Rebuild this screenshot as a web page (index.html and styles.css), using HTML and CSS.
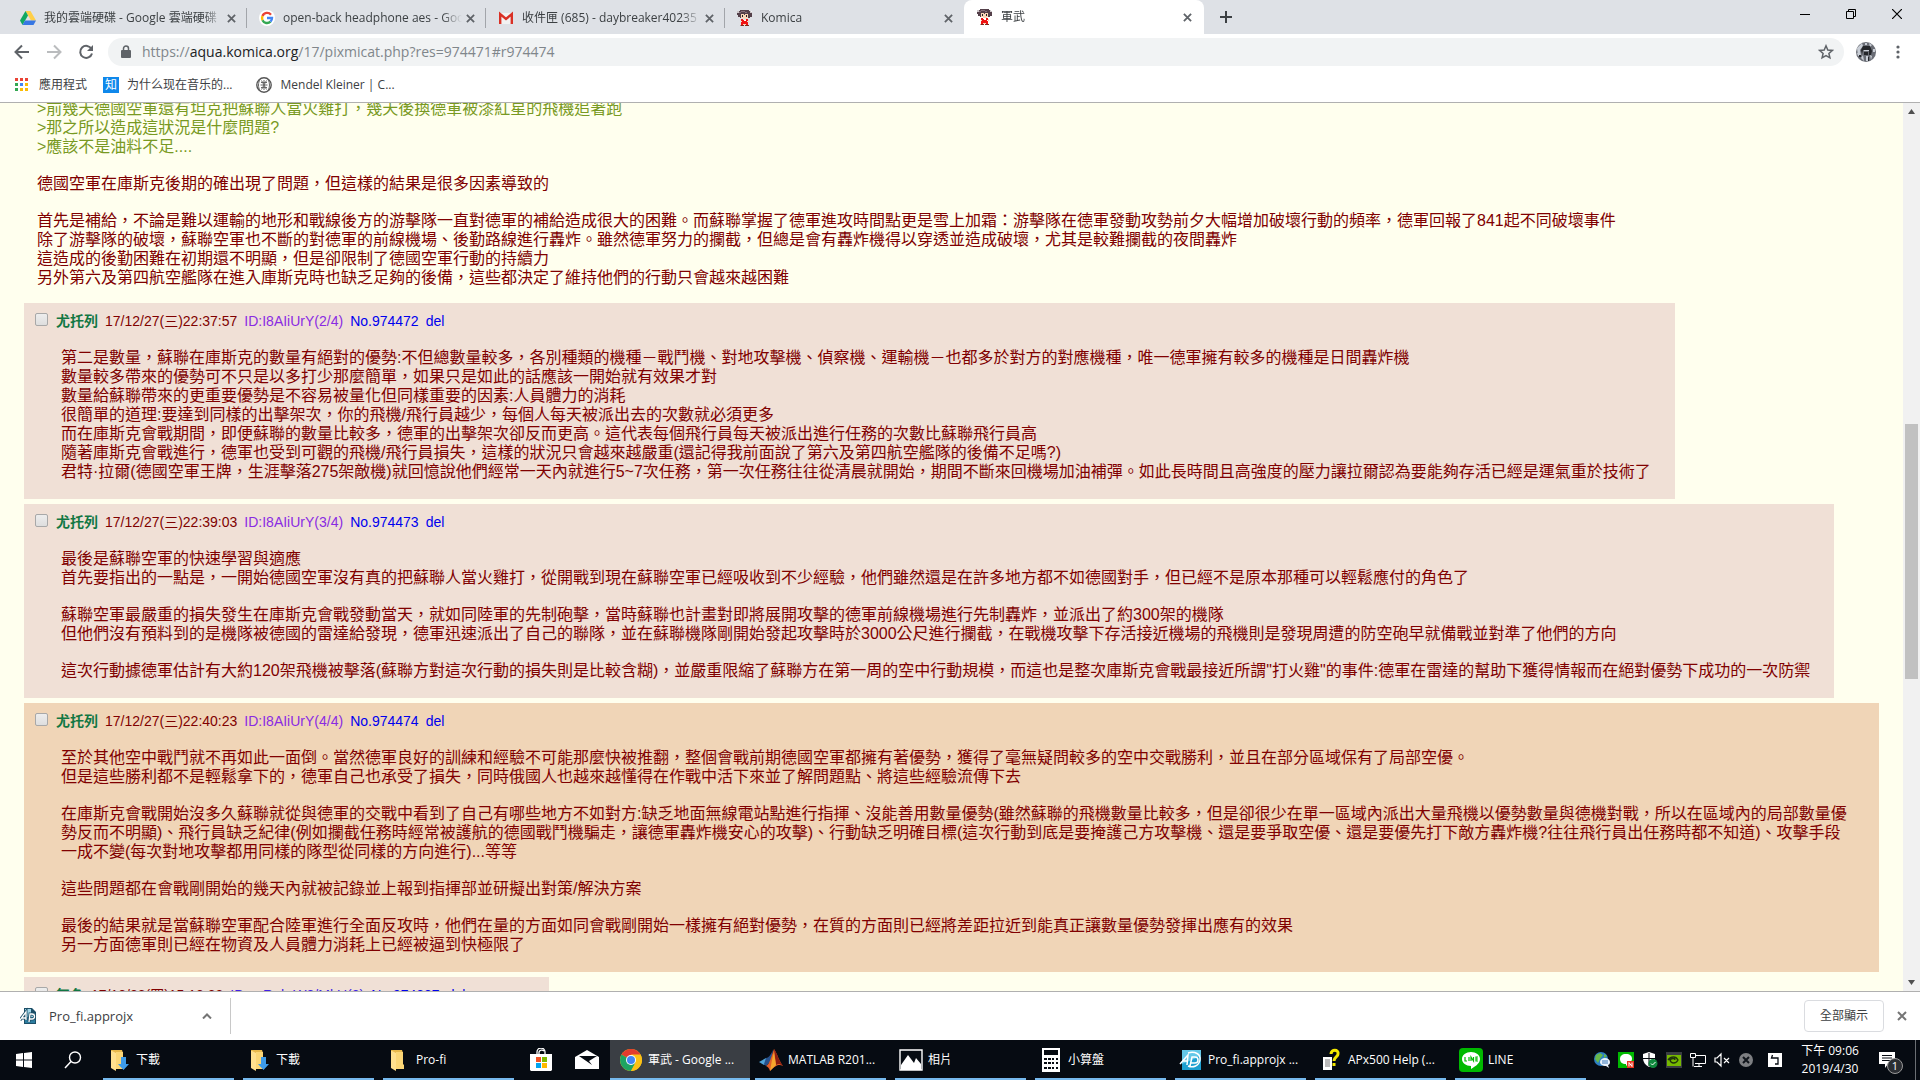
FILE: index.html
```html
<!DOCTYPE html>
<html lang="zh-Hant">
<head>
<meta charset="utf-8">
<title>軍武</title>
<link rel="stylesheet" href="styles.css">
</head>
<body>
<svg class="defs" aria-hidden="true">
  <symbol id="close" viewBox="0 0 10 10"><path d="M1 1l8 8M9 1L1 9" stroke="currentColor" stroke-width="2" fill="none"/></symbol>
  <symbol id="girl" viewBox="0 0 16 18">
    <path fill="#54404a" d="M3 1h9v1h2v1h1v5h-2v1H3V8H1V6H0V2h3z"/>
    <path fill="#86707a" d="M4 2h4v1H4zM2 3h2v1H2zM8 3h2v2H8z"/>
    <path fill="#fff" d="M0 2h2v2H0zM13 2h2v2h-2z" opacity=".7"/>
    <path fill="#f9d5b8" d="M4 5h7v4H4zM6 9h4v1H6zM4 12h1v2H4zM11 11h1v2h-1zM6 15h4v1H6z"/>
    <path fill="#222" d="M5 6h1v2H5zM9 6h1v2H9z"/>
    <path fill="#54404a" d="M4 4h8v1H4zM7 5h1v1H7z"/>
    <path fill="#f01212" d="M4 10h2v1h3v-1h2v2H4zM5 12h5v1H5zM4 13h7v3H9v-1H6v1H4z"/>
    <path fill="#fff" d="M7 11h2v1H7z"/>
    <path fill="#7c2a1c" d="M4 16h3v1H3zM8 16h4v1H8z"/>
  </symbol>
  <symbol id="folder" viewBox="0 0 24 24">
    <path fill="#e9b94c" d="M4 2h11l1 3v14H4z"/><path fill="#ffe08f" d="M5 3l4 2v18l-5-3V3z"/><path fill="#fbd676" d="M9 4h7v12l1 1v4H9z"/>
  </symbol>
  <symbol id="arrow-down" viewBox="0 0 24 24"><path fill="#3d9be9" d="M14 9h5v7h3l-5.500 6L11 16h3z"/></symbol>
</svg>

<header class="chrome">
  <div class="tabstrip">
    <div class="tab">
      <svg class="fav" viewBox="0 0 16 16"><path fill="#ffcf48" d="M5.500 1h5L16 10.500h-5z"/><path fill="#11a861" d="M5.500 1L8 5.500 2.500 15 0 10.500z"/><path fill="#3777e3" d="M5 10.500h11L13.500 15h-11z"/></svg>
      <span class="tab-title">我的雲端硬碟 - Google 雲端硬碟</span>
      <button class="tab-close" aria-label="關閉"><svg><use href="#close"/></svg></button>
    </div>
    <div class="tab">
      <svg class="fav" viewBox="0 0 16 16"><circle cx="8" cy="8" r="8" fill="#fff"/><g fill="none" stroke-width="2.400"><path stroke="#ea4335" d="M12 4.700A5 5 0 0 0 3.500 6"/><path stroke="#fbbc05" d="M3.500 6a5 5 0 0 0 0 4.200"/><path stroke="#34a853" d="M3.500 10.200A5 5 0 0 0 11.500 11.600"/><path stroke="#4285f4" d="M11.500 11.600A5 5 0 0 0 13 8H8"/></g></svg>
      <span class="tab-title">open-back headphone aes - Goo</span>
      <button class="tab-close" aria-label="關閉"><svg><use href="#close"/></svg></button>
    </div>
    <div class="tab">
      <svg class="fav" viewBox="0 0 16 16"><path fill="#f2f2f2" d="M1 3h14v11H1z"/><path fill="none" stroke="#d93025" stroke-width="2.400" d="M2.200 14V4L8 9l5.800-5v10"/></svg>
      <span class="tab-title">收件匣 (685) - daybreaker40235</span>
      <button class="tab-close" aria-label="關閉"><svg><use href="#close"/></svg></button>
    </div>
    <div class="tab tab-plain">
      <svg class="fav"><use href="#girl"/></svg>
      <span class="tab-title">Komica</span>
      <button class="tab-close" aria-label="關閉"><svg><use href="#close"/></svg></button>
    </div>
    <div class="tab tab-active">
      <svg class="fav"><use href="#girl"/></svg>
      <span class="tab-title">軍武</span>
      <button class="tab-close" aria-label="關閉"><svg><use href="#close"/></svg></button>
    </div>
    <button class="new-tab" aria-label="新分頁"><svg width="12" height="12" viewBox="0 0 12 12"><path d="M6 0v12M0 6h12" stroke="#3c4043" stroke-width="2"/></svg></button>
    <div class="window-buttons">
      <button aria-label="最小化"><svg width="10" height="10" viewBox="0 0 10 10"><path d="M0 5.500h10" stroke="#000"/></svg></button>
      <button aria-label="還原"><svg width="10" height="10" viewBox="0 0 10 10"><path d="M.5 2.500h7v7h-7zM2.500 2.500v-2h7v7h-2" stroke="#000" fill="none"/></svg></button>
      <button aria-label="關閉視窗"><svg width="10" height="10" viewBox="0 0 10 10"><path d="M0 0l10 10M10 0L0 10" stroke="#000" stroke-width="1.200"/></svg></button>
    </div>
  </div>

  <div class="toolbar">
    <button class="nav" aria-label="上一頁"><svg width="16" height="16" viewBox="0 0 16 16"><path d="M15 8H2M8 1.500L1.500 8 8 14.500" stroke="#5f6368" stroke-width="2" fill="none"/></svg></button>
    <button class="nav" aria-label="下一頁"><svg width="16" height="16" viewBox="0 0 16 16"><path d="M1 8h13M8 1.500L14.500 8 8 14.500" stroke="#babcbe" stroke-width="2" fill="none"/></svg></button>
    <button class="nav" aria-label="重新載入"><svg width="16" height="16" viewBox="0 0 16 16"><path d="M13.500 5A6 6 0 1 0 14 9.500" stroke="#5f6368" stroke-width="2" fill="none"/><path fill="#5f6368" d="M15 1v6H9z"/></svg></button>
    <div class="omnibox">
      <svg width="10" height="14" viewBox="0 0 10 14"><path fill="#5f6368" d="M1 5h8a1 1 0 0 1 1 1v6a1 1 0 0 1-1 1H1a1 1 0 0 1-1-1V6a1 1 0 0 1 1-1z"/><path d="M2.500 6V3.500a2.500 2.500 0 0 1 5 0V6" fill="none" stroke="#5f6368" stroke-width="1.500"/></svg>
      <span class="url">https://<b>aqua.komica.org</b>/17/pixmicat.php?res=974471#r974474</span>
      <button class="star" aria-label="加入書籤"><svg width="16" height="16" viewBox="0 0 16 16"><path d="M8 1.800l1.800 4.200 4.500.4-3.400 3 1 4.400L8 11.500l-3.900 2.300 1-4.400-3.400-3 4.500-.4z" fill="none" stroke="#5f6368" stroke-width="1.500"/></svg></button>
    </div>
    <button class="avatar" aria-label="個人資料"><svg width="20" height="20" viewBox="0 0 20 20"><circle cx="10" cy="10" r="10" fill="#6a6d75"/><path fill="#c9ced6" d="M1 6l5-5 1 3-3 4 1 5-3 1zM7 6h6v3H8zM13 1l3 2-2 2zM5 16l2-3 1 6zM10 14h2v5h-2zM14 13l2 1-1 4zM17 7h2v3h-2zM9 1h2v2H9zM1 11h2v3H2z"/><path fill="#24262a" d="M7 4h7l2 5-1 4h-2V8H7l-1 4-1-4zM8 10h4v3H8zM3 13h2v2H3zM12 15h1v4h-1z"/></svg></button>
    <button class="menu" aria-label="選單"><svg width="4" height="16" viewBox="0 0 4 16"><g fill="#5f6368"><circle cx="2" cy="3" r="1.600"/><circle cx="2" cy="8" r="1.600"/><circle cx="2" cy="13" r="1.600"/></g></svg></button>
  </div>

  <nav class="bookmarks">
    <a href="#apps" class="bm-apps"><svg width="14" height="14" viewBox="0 0 14 14"><path fill="#ea4335" d="M0 0h3v3H0zM5 0h3v3H5zM10 0h3v3h-3z"/><path fill="#34a853" d="M0 5h3v3H0zM0 10h3v3H0z"/><path fill="#4285f4" d="M5 5h3v3H5z"/><path fill="#fbbc05" d="M10 5h3v3h-3zM5 10h3v3H5zM10 10h3v3h-3z"/></svg><span>應用程式</span></a>
    <a href="#zhihu" class="bm-zhihu"><span class="zhi">知</span><span lang="zh-Hans">为什么现在音乐的...</span></a>
    <a href="#kleiner"><svg width="16" height="16" viewBox="0 0 16 16"><circle cx="8" cy="8" r="7.200" fill="none" stroke="#555" stroke-width="1.400"/><path d="M4 2.500c-2 3-2 8 0 11M12 2.500c2 3 2 8 0 11M5.500 3.500l5 9M10.500 3.500l-5 9M4.500 8h7M8 3v10M5 5.500h6M5 10.500h6" fill="none" stroke="#666"/></svg><span>Mendel Kleiner | C...</span></a>
  </nav>
</header>

<div class="viewport">
  <main class="thread">
    <article class="op">
      <p><span class="quote">&gt;前幾天德國空軍還有坦克把蘇聯人當火雞打，幾天後換德軍被漆紅星的飛機追著跑<br>&gt;那之所以造成這狀況是什麼問題?<br>&gt;應該不是油料不足....</span></p>
      <p>德國空軍在庫斯克後期的確出現了問題，但這樣的結果是很多因素導致的</p>
      <p>首先是補給，不論是難以運輸的地形和戰線後方的游擊隊一直對德軍的補給造成很大的困難。而蘇聯掌握了德軍進攻時間點更是雪上加霜：游擊隊在德軍發動攻勢前夕大幅增加破壞行動的頻率，德軍回報了841起不同破壞事件<br>除了游擊隊的破壞，蘇聯空軍也不斷的對德軍的前線機場、後勤路線進行轟炸。雖然德軍努力的攔截，但總是會有轟炸機得以穿透並造成破壞，尤其是較難攔截的夜間轟炸<br>這造成的後勤困難在初期還不明顯，但是卻限制了德國空軍行動的持續力<br>另外第六及第四航空艦隊在進入庫斯克時也缺乏足夠的後備，這些都決定了維持他們的行動只會越來越困難</p>
    </article>

    <article class="reply">
      <header class="meta"><input type="checkbox" aria-label="選取 974472"><b class="name">尤托列</b><span>17/12/27(三)22:37:57</span><span class="id">ID:I8AIiUrY(2/4)</span><a href="#r974472">No.974472</a><a href="#del">del</a></header>
      <div class="body">
        <p>第二是數量，蘇聯在庫斯克的數量有絕對的優勢:不但總數量較多，各別種類的機種－戰鬥機、對地攻擊機、偵察機、運輸機－也都多於對方的對應機種，唯一德軍擁有較多的機種是日間轟炸機<br>數量較多帶來的優勢可不只是以多打少那麼簡單，如果只是如此的話應該一開始就有效果才對<br>數量給蘇聯帶來的更重要優勢是不容易被量化但同樣重要的因素:人員體力的消耗<br>很簡單的道理:要達到同樣的出擊架次，你的飛機/飛行員越少，每個人每天被派出去的次數就必須更多<br>而在庫斯克會戰期間，即便蘇聯的數量比較多，德軍的出擊架次卻反而更高。這代表每個飛行員每天被派出進行任務的次數比蘇聯飛行員高<br>隨著庫斯克會戰進行，德軍也受到可觀的飛機/飛行員損失，這樣的狀況只會越來越嚴重(還記得我前面說了第六及第四航空艦隊的後備不足嗎?)<br>君特·拉爾(德國空軍王牌，生涯擊落275架敵機)就回憶說他們經常一天內就進行5~7次任務，第一次任務往往從清晨就開始，期間不斷來回機場加油補彈。如此長時間且高強度的壓力讓拉爾認為要能夠存活已經是運氣重於技術了</p>
      </div>
    </article>

    <article class="reply">
      <header class="meta"><input type="checkbox" aria-label="選取 974473"><b class="name">尤托列</b><span>17/12/27(三)22:39:03</span><span class="id">ID:I8AIiUrY(3/4)</span><a href="#r974473">No.974473</a><a href="#del">del</a></header>
      <div class="body">
        <p>最後是蘇聯空軍的快速學習與適應<br>首先要指出的一點是，一開始德國空軍沒有真的把蘇聯人當火雞打，從開戰到現在蘇聯空軍已經吸收到不少經驗，他們雖然還是在許多地方都不如德國對手，但已經不是原本那種可以輕鬆應付的角色了</p>
        <p>蘇聯空軍最嚴重的損失發生在庫斯克會戰發動當天，就如同陸軍的先制砲擊，當時蘇聯也計畫對即將展開攻擊的德軍前線機場進行先制轟炸，並派出了約300架的機隊<br>但他們沒有預料到的是機隊被德國的雷達給發現，德軍迅速派出了自己的聯隊，並在蘇聯機隊剛開始發起攻擊時於3000公尺進行攔截，在戰機攻擊下存活接近機場的飛機則是發現周遭的防空砲早就備戰並對準了他們的方向</p>
        <p>這次行動據德軍估計有大約120架飛機被擊落(蘇聯方對這次行動的損失則是比較含糊)，並嚴重限縮了蘇聯方在第一周的空中行動規模，而這也是整次庫斯克會戰最接近所謂"打火雞"的事件:德軍在雷達的幫助下獲得情報而在絕對優勢下成功的一次防禦</p>
      </div>
    </article>

    <article class="reply reply-target" id="r974474">
      <header class="meta"><input type="checkbox" aria-label="選取 974474"><b class="name">尤托列</b><span>17/12/27(三)22:40:23</span><span class="id">ID:I8AIiUrY(4/4)</span><a href="#r974474">No.974474</a><a href="#del">del</a></header>
      <div class="body">
        <p>至於其他空中戰鬥就不再如此一面倒。當然德軍良好的訓練和經驗不可能那麼快被推翻，整個會戰前期德國空軍都擁有著優勢，獲得了毫無疑問較多的空中交戰勝利，並且在部分區域保有了局部空優。<br>但是這些勝利都不是輕鬆拿下的，德軍自己也承受了損失，同時俄國人也越來越懂得在作戰中活下來並了解問題點、將這些經驗流傳下去</p>
        <p>在庫斯克會戰開始沒多久蘇聯就從與德軍的交戰中看到了自己有哪些地方不如對方:缺乏地面無線電站點進行指揮、沒能善用數量優勢(雖然蘇聯的飛機數量比較多，但是卻很少在單一區域內派出大量飛機以優勢數量與德機對戰，所以在區域內的局部數量優勢反而不明顯)、飛行員缺乏紀律(例如攔截任務時經常被護航的德國戰鬥機騙走，讓德軍轟炸機安心的攻擊)、行動缺乏明確目標(這次行動到底是要掩護己方攻擊機、還是要爭取空優、還是要優先打下敵方轟炸機?往往飛行員出任務時都不知道)、攻擊手段一成不變(每次對地攻擊都用同樣的隊型從同樣的方向進行)...等等</p>
        <p>這些問題都在會戰剛開始的幾天內就被記錄並上報到指揮部並研擬出對策/解決方案</p>
        <p>最後的結果就是當蘇聯空軍配合陸軍進行全面反攻時，他們在量的方面如同會戰剛開始一樣擁有絕對優勢，在質的方面則已經將差距拉近到能真正讓數量優勢發揮出應有的效果<br>另一方面德軍則已經在物資及人員體力消耗上已經被逼到快極限了</p>
      </div>
    </article>

    <article class="reply reply-short">
      <header class="meta"><input type="checkbox" aria-label="選取 974887"><b class="name">無名</b><span>17/12/28(四)15:18:38</span><span class="id id-alt">ID:snRahrW8/MkU(2)</span><a href="#r974887">No.974887</a><a href="#del">del</a></header>
    </article>
  </main>
  <div class="scrollbar">
    <svg class="sb-arrow" viewBox="0 0 17 17"><path fill="#505050" d="M5 11h7L8.500 6z"/></svg>
    <div class="sb-before"></div>
    <div class="sb-thumb"></div>
    <div class="sb-after"></div>
    <svg class="sb-arrow" viewBox="0 0 17 17"><path fill="#505050" d="M5 6h7l-3.500 5z"/></svg>
  </div>
</div>

<section class="shelf">
  <div class="download">
    <svg width="16" height="18" viewBox="0 0 16 18"><path fill="#1d4f68" d="M4 1h8l4 4v12H4z"/><path fill="#9fd6e8" d="M5 2h6v4h4v4H5z"/><path fill="#2d7da0" d="M5 10h10v6H5z"/><path d="M0 13l6-8v8M2 11h4M9 15l1-8h2a2.500 2.500 0 0 1 0 5H9" fill="none" stroke="#1d4f68" stroke-width="3"/><path d="M0 13l6-8v8M2 11h4M9 15l1-8h2a2.500 2.500 0 0 1 0 5H9" fill="none" stroke="#fff" stroke-width="1.300"/></svg>
    <span class="file">Pro_fi.approjx</span>
    <button class="caret" aria-label="更多"><svg width="10" height="6" viewBox="0 0 10 6"><path d="M1 5.500L5 1.500l4 4" fill="none" stroke="#757575" stroke-width="2"/></svg></button>
  </div>
  <button class="show-all">全部顯示</button>
  <button class="shelf-close" aria-label="關閉下載列"><svg width="10" height="10"><use href="#close"/></svg></button>
</section>

<footer class="taskbar">
  <button class="tb-sys" aria-label="開始"><svg width="16" height="16" viewBox="0 0 16 16"><path fill="#fff" d="M0 2l7-1v6.500H0zM8 1l8-1v7.500H8zM0 8.500h7V15l-7-1zM8 8.500h8V16l-8-1z"/></svg></button>
  <button class="tb-sys tb-search" aria-label="搜尋"><svg width="18" height="18" viewBox="0 0 18 18"><circle cx="11" cy="6.500" r="5.500" fill="none" stroke="#fff" stroke-width="1.400"/><path d="M7 10.500L1 17" stroke="#fff" stroke-width="1.500"/></svg></button>
  <button class="task"><svg><use href="#folder"/><use href="#arrow-down"/></svg><span>下載</span></button>
  <button class="task"><svg><use href="#folder"/><use href="#arrow-down"/></svg><span>下載</span></button>
  <button class="task"><svg><use href="#folder"/></svg><span>Pro-fi</span></button>
  <button class="tb-pin" aria-label="Store"><svg width="24" height="24" viewBox="0 0 24 24"><path fill="#fff" d="M1 6h22v16l-1 1H2l-1-1z"/><path d="M8 7V4a4 4 0 0 1 8 0v3M10 6V4a3 3 0 0 1 5-1" fill="none" stroke="#fff" stroke-width="1.300"/><path fill="#f25022" d="M7 9h5v5H7z"/><path fill="#7fba00" d="M13 9h5v5h-5z"/><path fill="#00a4ef" d="M7 15h5v5H7z"/><path fill="#ffb900" d="M13 15h5v5h-5z"/></svg></button>
  <button class="tb-pin" aria-label="郵件"><svg width="24" height="20" viewBox="0 0 24 20"><path fill="#fff" d="M0 7l12-7 12 7v12H0z"/><path fill="#060b12" d="M4 6h18l-8 5 3 4z"/></svg></button>
  <button class="task task-current"><svg viewBox="0 0 24 24"><circle cx="12" cy="12" r="11" fill="#fbc116"/><path fill="#e33b2e" d="M12 12L2.500 6.500a11 11 0 0 1 19 0z"/><path fill="#1da462" d="M2.500 6.500A11 11 0 0 0 12 23l4.500-8.500L12 12z"/><path fill="#fbc116" d="M12 23a11 11 0 0 0 9.500-16.500H12L17 14z"/><circle cx="12" cy="12" r="5" fill="#fff"/><circle cx="12" cy="12" r="4" fill="#4285f4"/></svg><span>軍武 - Google ...</span></button>
  <button class="task"><svg viewBox="0 0 24 24"><path fill="#4ea3d8" d="M0 14l7-4 4 3-6 4z"/><path fill="#27508a" d="M7 10c3 0 5-4 7-8l-2 11-5 5-2-2z"/><path fill="#e2602a" d="M15 1c3 4 5 12 9 17-4-2-7-1-13 5-1-3-2-4-4-5 4-2 5-9 8-17z"/><path fill="#8d1d10" d="M15 1c3 4 5 12 9 17-4-3-5-2-7-1z"/><path fill="#f6a62c" d="M11 23c1-6 2-12 4-19l2 13z"/></svg><span>MATLAB R201...</span></button>
  <button class="task"><svg viewBox="0 0 24 24"><path fill="none" stroke="#fff" stroke-width="1.400" d="M1 2h22v20H1z"/><path fill="#fff" d="M2 17l7-10 6 8 2-5 5 6v6H2z"/></svg><span>相片</span></button>
  <button class="task"><svg viewBox="0 0 24 24"><path fill="#fff" d="M3 0h18v24H3z"/><path fill="#060b12" d="M5 2h14v5H5zM5 10h3v2H5zM9 10h3v2H9zM13 10h2v2h-2zM17 10h2v2h-2zM5 14h3v2H5zM9 14h3v2H9zM13 14h2v2h-2zM17 14h2v2h-2zM5 19h3v2H5zM9 19h3v2H9zM13 19h2v2h-2zM17 19h2v2h-2z"/></svg><span>小算盤</span></button>
  <button class="task"><svg viewBox="0 0 24 24"><path fill="#1e9fd0" d="M3 2h19v20H3z"/><path fill="#63c8e8" d="M3 2h19v6L3 16z"/><path d="M1 16L9 7l-1 10M4 13h5M11 18l2-9h3a3 3 0 0 1 0 6h-4M9 5c7-2 13 1 12 7-1 6-7 8-12 6" fill="none" stroke="#fff" stroke-width="1.500"/></svg><span>Pro_fi.approjx ...</span></button>
  <button class="task"><svg viewBox="0 0 24 24"><path fill="#fff" d="M4 9h9v13H4z"/><path d="M6 12h5M6 14h5M6 16h5M6 18h5" stroke="#777"/><path d="M12 6c0-5 8-5 7 0 0 3-4 3-4 7M15 15v3" fill="none" stroke="#f4e800" stroke-width="3"/></svg><span>APx500 Help (...</span></button>
  <button class="task"><svg viewBox="0 0 24 24"><rect width="24" height="24" rx="4" fill="#00b900"/><path fill="#fff" d="M12 4c5 0 9 3 9 7 0 5-6 8-9 10v-3c-5 0-9-3-9-7s4-7 9-7z"/><path d="M6 9v4h2M10 9v4M12 13V9l2.500 4V9M19 9h-2v4h2M17 11h2" fill="none" stroke="#00b900" stroke-width="1.200"/></svg><span>LINE</span></button>

  <div class="tray">
    <svg viewBox="0 0 16 16"><circle cx="7" cy="7" r="7" fill="#2d7fc4"/><path fill="#67b84a" d="M2 3l4-2 3 2-3 4-2 4-3-4zM10 2l3 2-3 2z"/><path fill="#e8f1fa" d="M6 10a5 4 0 0 1 10 0c0 2-1 3-2 3l1 3-3-2c-4 0-6-2-6-4z"/><path d="M8 9h6M8 11h6" stroke="#3a78b8"/></svg>
    <svg viewBox="0 0 16 16"><path fill="#00b900" d="M0 0h16v16H0z"/><path fill="#fff" d="M8 2c4 0 6 2 6 5s-4 5-6 7v-2c-4 0-6-2-6-5s2-5 6-5z"/><path fill="#e8331d" d="M9 9h7v7H9z"/><path d="M11 14.500v-4l3 4v-4" stroke="#fff" fill="none"/></svg>
    <svg viewBox="0 0 16 16"><path fill="#fff" d="M7 0l6 2v4c0 4-2 7-6 9-4-2-6-5-6-9V2z"/><path d="M7 1v13M1 6.500h12" stroke="#060b12"/><circle cx="11" cy="11.500" r="4.500" fill="#10893e"/><path d="M9 11.500l1.500 1.500 3-3" stroke="#fff" fill="none"/></svg>
    <svg viewBox="0 0 16 16"><path fill="#393d42" d="M0 0h16v16H0z"/><path fill="#76b900" d="M1 3h14v11H1z"/><path d="M2 8c3-4 8-4 10 0-2 4-7 4-8 0 2-2 5-2 5 0" fill="none" stroke="#20350a" stroke-width="1.300"/></svg>
    <svg viewBox="0 0 16 16"><path d="M5 3.500h10.500v8H5M4 14.500h8M9 11v3M.5 1.500h5v4h-5zM3 5.500v9" fill="none" stroke="#fff"/></svg>
    <svg viewBox="0 0 16 16"><path d="M1 6h2l4-4v12l-4-4H1zM10 6l5 5M15 6l-5 5" fill="none" stroke="#fff" stroke-width="1.200"/></svg>
    <svg viewBox="0 0 16 16"><circle cx="8" cy="8" r="7" fill="#7d7f82"/><path d="M5 5l6 6M11 5l-6 6" stroke="#10151b" stroke-width="2"/></svg>
    <svg class="ime" viewBox="0 0 16 16"><path fill="#fff" d="M1 1h14v14H1z"/><path d="M5.500 3L4.500 6H11v6H8" fill="none" stroke="#060b12" stroke-width="1.300"/></svg>
    <div class="clock"><span>下午 09:06</span><span>2019/4/30</span></div>
    <button class="notice" aria-label="通知"><svg viewBox="0 0 16 16"><path fill="#fff" d="M0 0h16v12H9l-3 4v-4H0z"/><path d="M3 3.500h10M3 6h10M3 8.500h10" stroke="#060b12"/></svg><span class="badge">1</span></button>
    <div class="peek"></div>
  </div>
</footer>
</body>
</html>
```

FILE: styles.css
```css
* { box-sizing: border-box; }

body {
  margin: 0;
  height: 100vh;
  display: flex;
  flex-direction: column;
  overflow: hidden;
  font: 12px/16px "Open Sans", "Noto Sans CJK TC", sans-serif;
  color: #3c4043;
  background: #fff;
}

button {
  margin: 0;
  padding: 0;
  border: 0;
  background: none;
  font: inherit;
  color: inherit;
  display: flex;
  align-items: center;
  justify-content: center;
}

svg { display: block; flex: none; }
a { text-decoration: none; }
.defs { position: absolute; width: 0; height: 0; }

/* Tab strip */
.chrome { flex: none; border-bottom: 1px solid #b0b0b0; }
.tabstrip {
  display: flex;
  height: 34px;
  padding-left: 8px;
  background: #dee1e6;
}
.tab {
  flex: 0 1 239px;
  min-width: 0;
  display: flex;
  align-items: center;
  margin: 8px 0 6px;
  padding: 0 10px 0 12px;
  border-right: 1px solid #a2a5aa;
}
.tab-plain { border-color: transparent; }
.tab-active {
  flex-basis: 240px;
  margin: 0;
  padding: 0 12px 0 13px;
  border: 0;
  border-radius: 8px 8px 0 0;
  background: #fff;
}
.fav { width: 16px; height: 18px; }
.tab-title {
  flex: 1;
  margin: 0 4px 0 8px;
  overflow: hidden;
  white-space: nowrap;
  mask-image: linear-gradient(to right, #000 calc(100% - 20px), transparent);
}
.tab-close svg { width: 9px; height: 9px; color: #5f6368; }
.new-tab { width: 44px; }
.window-buttons { display: flex; margin-left: auto; height: 28px; }
.window-buttons button { width: 46px; }

/* Address bar */
.toolbar {
  display: flex;
  align-items: center;
  height: 36px;
  padding: 0 12px 0 6px;
}
.nav { width: 32px; height: 28px; }
.omnibox {
  flex: 1;
  display: flex;
  align-items: center;
  gap: 11px;
  height: 28px;
  margin-left: 6px;
  padding: 0 10px 0 13px;
  border-radius: 14px;
  background: #f1f3f4;
}
.url { font-size: 14px; color: #80868b; }
.url b { font-weight: normal; color: #202124; }
.star { margin-left: auto; }
.avatar { margin-left: 12px; }
.menu { width: 20px; margin-left: 12px; }

/* Bookmarks */
.bookmarks {
  display: flex;
  align-items: center;
  gap: 16px;
  height: 32px;
  padding: 0 15px 3px;
}
.bookmarks a { display: flex; align-items: center; gap: 8px; color: #3c4043; }
.bookmarks .bm-apps { gap: 10px; }
.bookmarks .bm-zhihu { margin-right: 8px; }
.bookmarks [lang="zh-Hans"] { font-family: "Open Sans", "Noto Sans CJK SC", sans-serif; }
.zhi {
  width: 16px;
  height: 16px;
  background: #0f88eb;
  color: #fff;
  text-align: center;
}

/* Page */
.viewport {
  flex: 1;
  min-height: 0;
  display: flex;
  background: #ffffee;
}
.thread {
  flex: 1;
  min-width: 0;
  overflow: hidden;
  padding: 0 24px;
  font: 16px/19px "Liberation Sans", "Noto Sans CJK TC", sans-serif;
  color: #800000;
}
.thread p { margin: 0; }
.thread p + p { margin-top: 18px; }
.op { margin: -4px 0 16px; padding-left: 13px; }
.quote { color: #789922; }
.reply {
  width: fit-content;
  margin-bottom: 5px;
  padding: 9px 24px 18px 11px;
  background: #f0e0d6;
}
.reply-target { background: #f0d5b7; }
.reply-short { min-width: 525px; }
.meta {
  display: flex;
  align-items: center;
  gap: 7px;
  height: 18px;
  font-size: 14px;
  line-height: 18px;
}
.meta input {
  appearance: none;
  width: 13px;
  height: 13px;
  margin: 0 1px 4px 0;
  border: 1px solid #a8a8a8;
  border-radius: 2px;
  background: linear-gradient(#ededed, #dedede);
}
.meta a { color: #0000ee; }
.name { color: #117743; }
.id { color: #8a2be2; }
.id-alt { color: #4020e8; }
.body { padding: 18px 0 0 26px; }

.scrollbar {
  flex: none;
  width: 17px;
  display: flex;
  flex-direction: column;
  align-items: center;
  background: #f1f1f1;
}
.sb-arrow { width: 17px; height: 17px; }
.sb-before { flex: 304; }
.sb-thumb { flex: 255; width: 13px; background: #c1c1c1; }
.sb-after { flex: 295; }

/* Download shelf */
.shelf {
  flex: none;
  display: flex;
  align-items: center;
  height: 49px;
  padding-right: 13px;
  border-top: 1px solid #b0b0b0;
}
.download {
  display: flex;
  align-items: center;
  width: 231px;
  height: 36px;
  padding: 0 18px 0 20px;
  border-right: 1px solid #c8c8c8;
}
.file { margin-left: 13px; font-size: 13px; line-height: 18px; }
.caret { width: 10px; margin-left: auto; }
.show-all {
  width: 80px;
  height: 32px;
  margin-left: auto;
  border: 1px solid #dadce0;
  border-radius: 4px;
}
.shelf-close { margin-left: 13px; color: #757575; }

/* Taskbar */
.taskbar {
  flex: none;
  display: flex;
  height: 40px;
  background: #060b12;
  color: #fff;
}
.tb-sys { width: 47px; }
.tb-search { width: 51px; }
.tb-pin { width: 46px; }
.task {
  flex: 0 1 140px;
  min-width: 0;
  justify-content: flex-start;
  gap: 5px;
  padding-left: 9px;
  white-space: nowrap;
  background: linear-gradient(#76b9ed, #76b9ed) 5px 100% / calc(100% - 9px) 2px no-repeat;
}
.task svg { width: 24px; height: 24px; }
.task-current {
  background: linear-gradient(#76b9ed, #76b9ed) 0 100% / 100% 2px no-repeat #3a3e44;
}
.tray {
  flex: none;
  display: flex;
  align-items: center;
  gap: 8px;
  margin-left: auto;
}
.tray svg { width: 16px; height: 16px; }
.tray .ime { margin-left: 5px; }
.clock {
  width: 78px;
  display: flex;
  flex-direction: column;
  text-align: center;
  line-height: 18px;
}
.notice { position: relative; margin: 0 12px 0 2px; }
.badge {
  position: absolute;
  left: 8px;
  top: 6px;
  width: 16px;
  height: 16px;
  border: 1px solid #9a9a9a;
  border-radius: 50%;
  background: #2b2e33;
  font-size: 11px;
  line-height: 14px;
}
.peek { width: 5px; height: 40px; border-left: 1px solid #6a6e73; }
```
